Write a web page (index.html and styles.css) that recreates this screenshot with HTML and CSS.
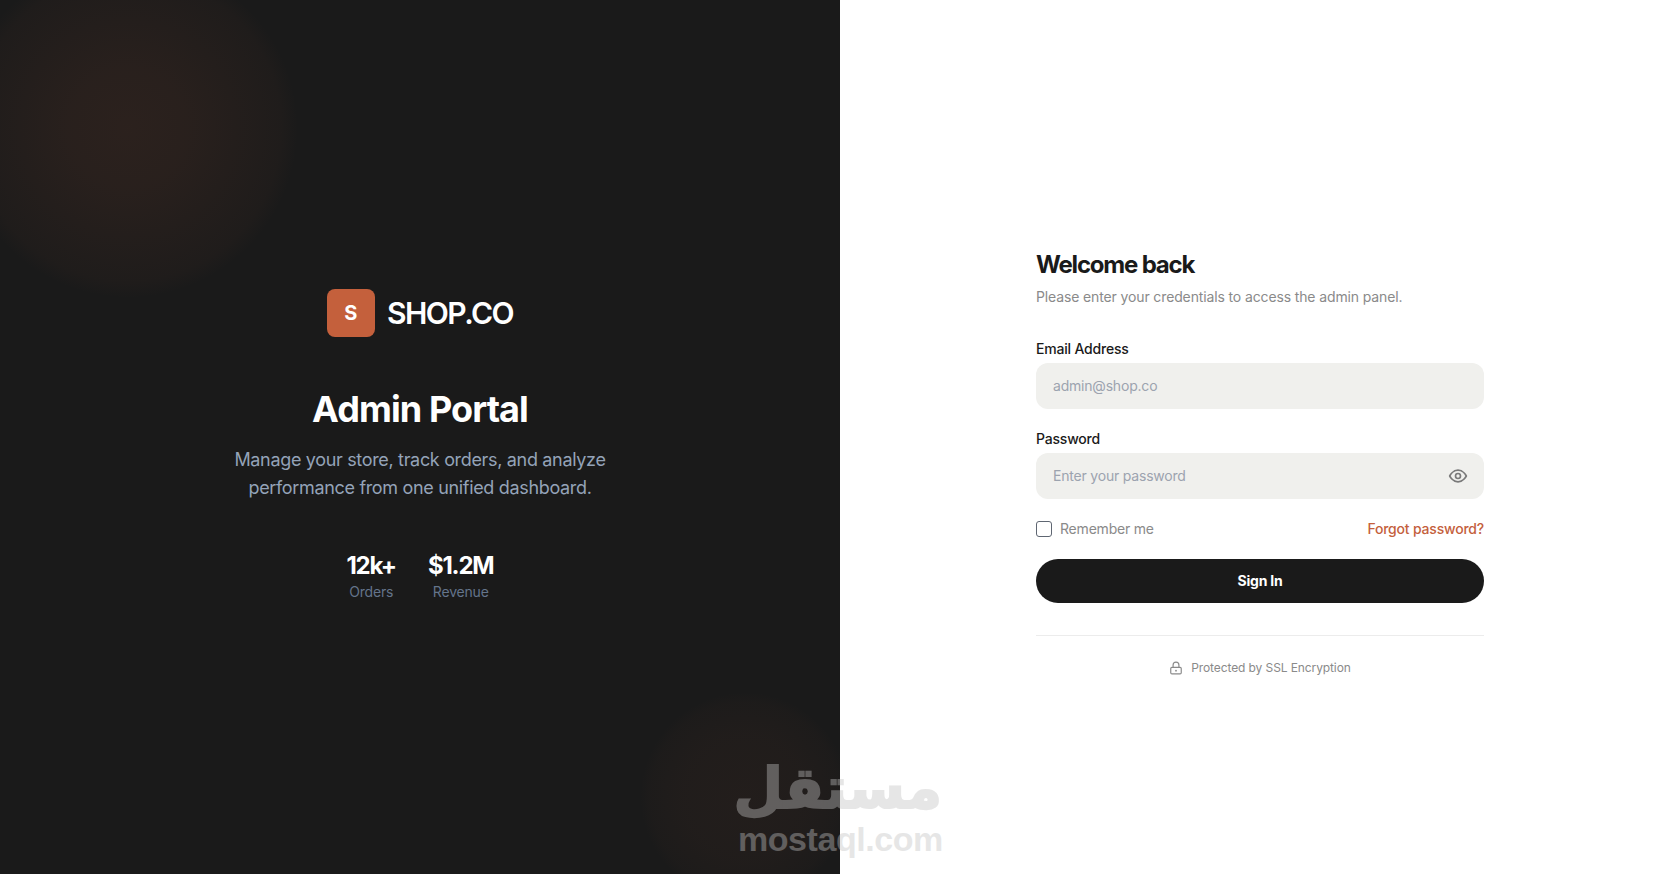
FILE: index.html
```html
<!DOCTYPE html>
<html lang="en">
<head>
    <meta charset="UTF-8">
    <meta name="viewport" content="width=device-width, initial-scale=1.0">
    <title>SHOP.CO Admin Login</title>
    <link rel="stylesheet" href="styles.css">
</head>
<body>
    <div class="login-page">
        <div class="brand-panel">
            <div class="glow glow-top"></div>
            <div class="glow glow-bottom"></div>
            <div class="brand-content">
                <div class="logo">
                    <div class="logo-mark">S</div>
                    <span class="logo-name">SHOP.CO</span>
                </div>
                <h1>Admin Portal</h1>
                <p class="brand-text">Manage your store, track orders, and analyze<br>performance from one unified dashboard.</p>
                <div class="stats">
                    <div class="stat">
                        <div class="stat-value">12k+</div>
                        <div class="stat-label">Orders</div>
                    </div>
                    <div class="stat">
                        <div class="stat-value">$1.2M</div>
                        <div class="stat-label">Revenue</div>
                    </div>
                </div>
            </div>
        </div>

        <div class="form-panel">
            <form class="login-form">
                <h2>Welcome back</h2>
                <p class="form-sub">Please enter your credentials to access the admin panel.</p>

                <div class="form-group">
                    <label for="email">Email Address</label>
                    <input type="email" id="email" placeholder="admin@shop.co">
                </div>

                <div class="form-group">
                    <label for="password">Password</label>
                    <div class="input-wrap">
                        <input type="password" id="password" placeholder="Enter your password">
                        <svg class="eye" viewBox="0 0 24 24" fill="none" stroke="currentColor" stroke-width="2" stroke-linecap="round" stroke-linejoin="round">
                            <path d="M2 12s3.6-7 10-7 10 7 10 7-3.6 7-10 7-10-7-10-7z"/>
                            <circle cx="12" cy="12" r="3"/>
                        </svg>
                    </div>
                </div>

                <div class="form-row">
                    <label class="remember"><span class="check"></span>Remember me</label>
                    <a class="forgot" href="#">Forgot password?</a>
                </div>

                <button type="button" class="btn">Sign In</button>

                <div class="form-footer">
                    <svg class="lock" viewBox="0 0 24 24" fill="none" stroke="currentColor" stroke-width="2" stroke-linecap="round" stroke-linejoin="round">
                        <rect x="3" y="11" width="18" height="11" rx="2"/>
                        <path d="M7 11V7a5 5 0 0 1 10 0v4"/>
                        <circle cx="12" cy="16.5" r="0.6"/>
                    </svg>
                    <span>Protected by SSL Encryption</span>
                </div>
            </form>
        </div>

        <div class="watermark">
            <div class="wm-ar" lang="ar" dir="rtl">مستقل</div>
            <div class="wm-en">mostaql.com</div>
        </div>
    </div>
</body>
</html>
```

FILE: styles.css
```css
* {
    box-sizing: border-box;
}
body {
    margin: 0;
    font-family: 'Inter', 'Noto Sans', sans-serif;
    background: white;
    color: #1a1a1a;
}
.login-page {
    position: relative;
    display: flex;
    height: 874px;
    overflow: hidden;
}
.brand-panel {
    position: relative;
    width: 840px;
    background: #1a1a1a;
    display: flex;
    align-items: center;
    justify-content: center;
    overflow: hidden;
}
.glow {
    position: absolute;
    border-radius: 50%;
}
.glow-top {
    left: -42px;
    top: -42px;
    width: 340px;
    height: 340px;
    background: radial-gradient(closest-side, rgba(196,96,60,0.1) 0%, rgba(196,96,60,0.085) 35%, rgba(196,96,60,0.05) 70%, rgba(196,96,60,0.03) 90%, transparent 100%);
}
.glow-bottom {
    left: 640px;
    top: 692px;
    width: 210px;
    height: 210px;
    background: radial-gradient(closest-side, rgba(196,96,60,0.05) 0%, rgba(196,96,60,0.04) 60%, rgba(196,96,60,0.02) 90%, transparent 100%);
}
.brand-content {
    position: relative;
    text-align: center;
    margin-top: 16px;
}
.logo {
    display: flex;
    align-items: center;
    justify-content: center;
    gap: 12px;
    margin-bottom: 52px;
}
.logo-mark {
    width: 48px;
    height: 48px;
    background: #c4603c;
    border-radius: 8px;
    color: white;
    font-size: 20px;
    font-weight: 700;
    display: flex;
    align-items: center;
    justify-content: center;
}
.logo-name {
    color: white;
    font-size: 30px;
    font-weight: 600;
    letter-spacing: -1.5px;
}
h1 {
    margin: 0 0 17px;
    color: white;
    font-size: 36px;
    line-height: 40px;
    font-weight: 700;
    letter-spacing: -0.9px;
}
.brand-text {
    margin: 0 0 48px;
    color: #94a3b8;
    font-size: 18px;
    line-height: 28px;
    letter-spacing: -0.33px;
}
.stats {
    display: flex;
    justify-content: center;
    gap: 32px;
}
.stat-value {
    color: white;
    font-size: 24px;
    line-height: 32px;
    font-weight: 700;
    letter-spacing: -1.2px;
}
.stat-label {
    color: #64748b;
    font-size: 14px;
    line-height: 20px;
    letter-spacing: -0.2px;
}
.form-panel {
    flex: 1;
    display: flex;
    align-items: center;
    justify-content: center;
}
.login-form {
    width: 448px;
    margin-top: 50px;
}
h2 {
    margin: 0 0 6px;
    font-size: 24px;
    line-height: 32px;
    font-weight: 700;
    letter-spacing: -1.2px;
}
.form-sub {
    margin: 0 0 32px;
    color: #8a8a8a;
    font-size: 14px;
    line-height: 20px;
    letter-spacing: -0.13px;
}
.form-group {
    margin-bottom: 20px;
}
.form-group label {
    display: block;
    margin-bottom: 4px;
    font-size: 14px;
    line-height: 20px;
    font-weight: 500;
    letter-spacing: -0.2px;
}
.form-group input {
    display: block;
    width: 100%;
    height: 46px;
    padding: 0 17px;
    border: none;
    border-radius: 12px;
    background: #f0f0ed;
    font-family: inherit;
    font-size: 14px;
    letter-spacing: -0.2px;
    color: #1a1a1a;
}
.form-group input::placeholder {
    color: #9ca3af;
    opacity: 1;
}
.input-wrap {
    position: relative;
}
.eye {
    position: absolute;
    right: 16px;
    top: 13px;
    width: 20px;
    height: 20px;
    color: #7a7a7a;
}
.form-row {
    display: flex;
    align-items: center;
    justify-content: space-between;
    margin-top: 16px;
    margin-bottom: 20px;
    font-size: 14px;
    line-height: 20px;
    letter-spacing: -0.2px;
}
.remember {
    display: flex;
    align-items: center;
    gap: 8px;
    color: #8a8a8a;
}
.check {
    width: 16px;
    height: 16px;
    border: 1px solid #5f6672;
    border-radius: 3px;
    background: white;
}
.forgot {
    color: #c4603c;
    font-weight: 500;
    text-decoration: none;
}
.btn {
    display: block;
    width: 100%;
    height: 44px;
    border: none;
    border-radius: 22px;
    background: #1a1a1a;
    color: white;
    font-family: inherit;
    font-size: 14px;
    font-weight: 700;
    letter-spacing: -0.2px;
}
.form-footer {
    display: flex;
    align-items: center;
    justify-content: center;
    gap: 8px;
    margin-top: 32px;
    padding-top: 24px;
    border-top: 1px solid #ececec;
    color: #8a8a8a;
    font-size: 12px;
    line-height: 16px;
    letter-spacing: -0.1px;
}
.lock {
    width: 14px;
    height: 14px;
}
.watermark {
    position: absolute;
    left: 738px;
    top: 755px;
    width: 204px;
    color: #c2c2c2;
    opacity: 0.4;
    text-align: center;
    pointer-events: none;
}
.wm-ar {
    font-family: 'DejaVu Sans', sans-serif;
    font-size: 57px;
    font-weight: 700;
    line-height: 66px;
    -webkit-text-stroke: 2px #c2c2c2;
}
.wm-en {
    font-family: 'Liberation Sans', sans-serif;
    font-size: 34px;
    font-weight: 700;
    line-height: 36px;
    letter-spacing: -0.45px;
}
```
